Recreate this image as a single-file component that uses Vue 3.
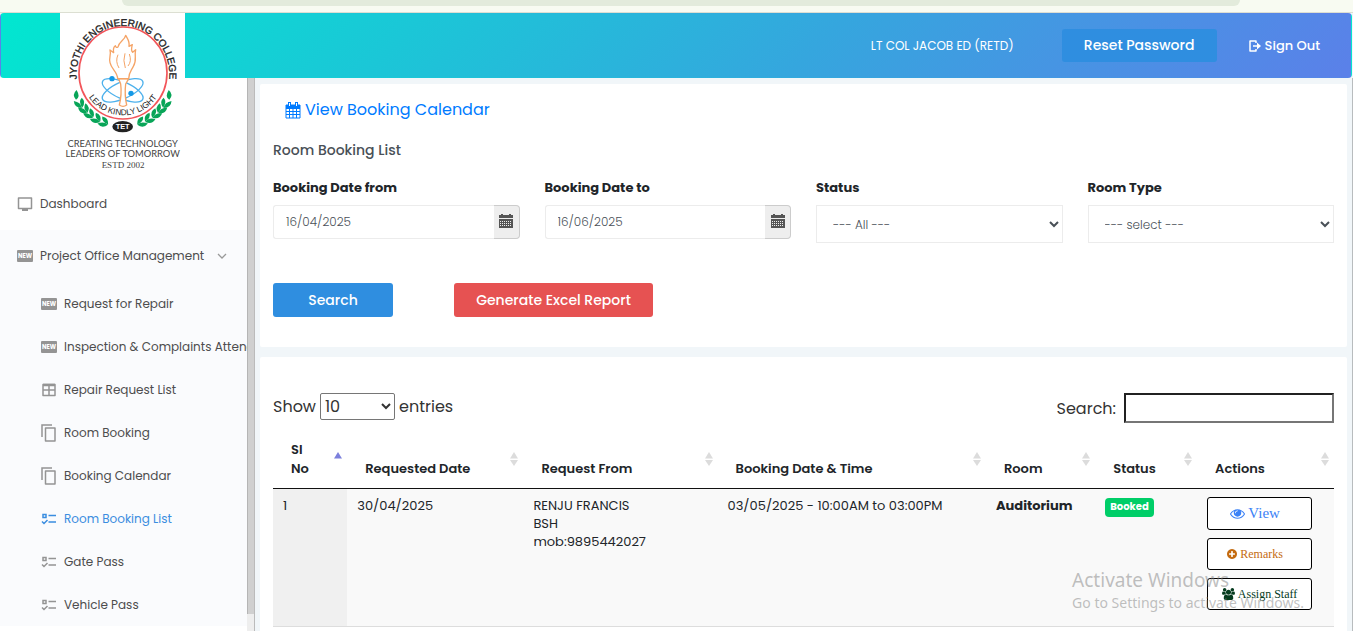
<script setup>
import { ref } from 'vue'

const navItems = [
  { label: 'Request for Repair', icon: 'new' },
  { label: 'Inspection & Complaints Attended', icon: 'new' },
  { label: 'Repair Request List', icon: 'grid' },
  { label: 'Room Booking', icon: 'copy' },
  { label: 'Booking Calendar', icon: 'copy' },
  { label: 'Room Booking List', icon: 'list', active: true },
  { label: 'Gate Pass', icon: 'list' },
  { label: 'Vehicle Pass', icon: 'list' },
]

const columns = [
  { label: 'Sl No', cls: 'c-no', sorted: true },
  { label: 'Requested Date', cls: 'c-date' },
  { label: 'Request From', cls: 'c-from' },
  { label: 'Booking Date & Time', cls: 'c-time' },
  { label: 'Room', cls: 'c-room' },
  { label: 'Status', cls: 'c-status' },
  { label: 'Actions', cls: 'c-actions' },
]

const rows = [
  {
    no: 1,
    date: '30/04/2025',
    from: ['RENJU FRANCIS', 'BSH', 'mob:9895442027'],
    time: '03/05/2025 - 10:00AM to 03:00PM',
    room: 'Auditorium',
    status: 'Booked',
  },
]

// Angle of each laurel leaf pair around the emblem, in degrees below the horizontal.
const leaves = [35, 43, 51, 60, 69]

const dateFrom = ref('16/04/2025')
const dateTo = ref('16/06/2025')
const status = ref('all')
const roomType = ref('')
const pageSize = ref('10')
const query = ref('')
</script>

<template>
  <div class="page">
    <div class="browser-strip"><div class="address-bar"></div></div>

    <header class="topbar">
      <a href="#" class="logo" aria-label="Jyothi Engineering College">
        <svg viewBox="180 39 375 480" width="125" height="160">
          <defs>
            <path id="arc-top" d="M233 253A139 145 0 1 1 505 253" />
            <path id="arc-bottom" d="M247 244A124 124 0 0 0 491 244" />
          </defs>
          <text class="arc-name"><textPath href="#arc-top" startOffset="50%">JYOTHI ENGINEERING COLLEGE</textPath></text>
          <ellipse cx="369" cy="219" rx="132" ry="138" fill="none" stroke="#f2555a" stroke-width="5" />
          <text class="arc-motto"><textPath href="#arc-bottom" startOffset="50%">LEAD KINDLY LIGHT</textPath></text>
          <g fill="none" stroke="#4db1ec" stroke-width="4">
            <ellipse cx="368" cy="271" rx="66" ry="25" transform="rotate(24 368 271)" />
            <ellipse cx="368" cy="271" rx="66" ry="25" transform="rotate(-24 368 271)" />
          </g>
          <g fill="#fff" stroke="#f5a467" stroke-width="4" stroke-linejoin="round">
            <path d="M356 236L362 252Q366 283 358 315Q369 323 380 315Q373 283 377 252L386 236Z" />
            <path d="M353 236C352 216 334 207 330 188C326 172 334 164 330 150L341 158Q338 143 346 137Q348 145 354 141C357 124 374 121 377 106C382 116 390 124 387 139L397 134Q392 151 398 157L407 149C402 171 412 180 400 199C393 213 386 218 386 236Z" />
            <path d="M354 164Q345 184 357 204M388 162Q396 184 384 198M375 160Q368 181 376 204" fill="none" stroke-width="3" />
            <path d="M353 236H386" fill="none" />
          </g>
          <circle cx="336" cy="236" r="8" fill="#1499e6" />
          <circle cx="393" cy="280" r="8" fill="#1499e6" />
          <g fill="#08a558">
            <g v-for="side in [1, -1]" :key="side" :transform="`translate(368 221) scale(${side} 1)`">
              <path transform="rotate(25)" d="M146 -14Q166 -8 160 12Q143 10 146 -14Z" />
              <g v-for="a in leaves" :key="a" :transform="`rotate(${a})`">
                <path d="M159 14Q152 -2 167 -17Q178 1 159 14Z" />
                <path d="M158 14Q138 8 142 -11Q158 -8 158 14Z" />
              </g>
            </g>
          </g>
          <ellipse cx="368" cy="380" rx="31" ry="17" fill="#222" />
          <text class="tet" x="368" y="388">TET</text>
          <text class="tagline" x="368" y="442">CREATING TECHNOLOGY</text>
          <text class="tagline" x="368" y="472">LEADERS OF TOMORROW</text>
          <text class="estd" x="369" y="503">ESTD 2002</text>
        </svg>
      </a>
      <span class="user-name">LT COL JACOB ED (RETD)</span>
      <button type="button" class="btn reset">Reset Password</button>
      <a href="#" class="sign-out">
        <svg viewBox="0 0 12 12" width="12" height="12" fill="none" stroke="currentColor" stroke-width="1.500" stroke-linejoin="round">
          <path d="M7 3V1H1V11H7V9M4 6H9" /><path d="M8 2.500L12 6L8 9.500Z" fill="currentColor" stroke="none" />
        </svg>
        Sign Out
      </a>
    </header>

    <div class="body">
      <nav class="sidebar">
        <a href="#" class="nav-link top">
          <svg viewBox="0 0 16 14" width="16" height="14"><path d="M1.500 1H14.500V11.500H1.500Z" fill="none" stroke="#949494" stroke-width="1.500" stroke-linejoin="round" /><path d="M5 12H11V14H5Z" fill="#949494" /></svg>
          Dashboard
        </a>
        <div class="nav-group">
          <a href="#" class="nav-link top">
            <span class="new-icon">NEW</span>
            Project Office Management
            <svg class="chevron" viewBox="0 0 10 6" width="10" height="6"><path d="M1 1L5 5L9 1" fill="none" stroke="#999" stroke-width="1.300" /></svg>
          </a>
          <a v-for="item in navItems" :key="item.label" href="#" class="nav-link sub" :class="{ active: item.active }">
            <span v-if="item.icon === 'new'" class="new-icon">NEW</span>
            <svg v-else-if="item.icon === 'grid'" viewBox="0 0 16 14" width="16" height="14"><path d="M2 1.500H14V12.500H2ZM2 7H14M8 2V12" fill="none" stroke="currentColor" stroke-width="1.500" stroke-linejoin="round" /><path d="M2 2H14" stroke="currentColor" stroke-width="2.500" /></svg>
            <svg v-else-if="item.icon === 'copy'" viewBox="0 0 16 18" width="16" height="18" fill="none" stroke="currentColor" stroke-width="1.500"><path d="M1 13V1H11" /><path d="M4.500 4H14V17H4.500Z" stroke-linejoin="round" /></svg>
            <svg v-else viewBox="0 0 16 12" width="16" height="12" fill="none" stroke="currentColor" stroke-width="1.500"><path d="M2 1.500H5V4.500H2ZM7.500 2.500H15M7.500 9H15M1 8.500L3 10.500L6.500 7" /></svg>
            {{ item.label }}
          </a>
        </div>
      </nav>
      <div class="scroll-track"><div class="scroll-thumb"></div></div>

      <main class="content">
        <section class="card">
          <a href="#" class="calendar-link">
            <svg viewBox="0 0 16 17" width="16" height="17"><path d="M1 3H15V16H1ZM1 6.500H15M1 9.500H15M1 12.500H15M4.500 6V16M8 6V16M11.500 6V16" fill="none" stroke="currentColor" /><path d="M1 3H15V6H1ZM3 0H6V5H3ZM10 0H13V5H10Z" fill="currentColor" /><path d="M4.500 1V4M11.500 1V4" stroke="#fff" /></svg>
            View Booking Calendar
          </a>
          <h1>Room Booking List</h1>
          <form class="filters" @submit.prevent>
            <div class="field">
              <label for="from">Booking Date from</label>
              <div class="date-box">
                <input id="from" v-model="dateFrom" type="text" />
                <button type="button" aria-label="Pick start date">
                  <svg viewBox="0 0 14 14" width="14" height="14"><path d="M0 1H2V0H4V1H10V0H12V1H14V4H0ZM0 5H14V14H0Z" fill="#555" /><path d="M1 7.500H13M1 9.500H13M1 11.500H13" stroke="#eee" stroke-dasharray="1 1" /></svg>
                </button>
              </div>
            </div>
            <div class="field">
              <label for="to">Booking Date to</label>
              <div class="date-box">
                <input id="to" v-model="dateTo" type="text" />
                <button type="button" aria-label="Pick end date">
                  <svg viewBox="0 0 14 14" width="14" height="14"><path d="M0 1H2V0H4V1H10V0H12V1H14V4H0ZM0 5H14V14H0Z" fill="#555" /><path d="M1 7.500H13M1 9.500H13M1 11.500H13" stroke="#eee" stroke-dasharray="1 1" /></svg>
                </button>
              </div>
            </div>
            <div class="field">
              <label for="status">Status</label>
              <select id="status" v-model="status"><option value="all">--- All ---</option></select>
            </div>
            <div class="field">
              <label for="room">Room Type</label>
              <select id="room" v-model="roomType"><option value="">--- select ---</option></select>
            </div>
          </form>
          <div class="actions">
            <button type="button" class="btn search">Search</button>
            <button type="button" class="btn excel">Generate Excel Report</button>
          </div>
        </section>

        <section class="card list">
          <div class="table-tools">
            <label class="length">Show
              <select v-model="pageSize"><option>10</option><option>25</option></select>
              entries</label>
            <label class="finder">Search: <input v-model="query" type="search" /></label>
          </div>
          <table>
            <thead>
              <tr>
                <th v-for="c in columns" :key="c.label" :class="c.cls" scope="col">
                  {{ c.label }}
                  <svg class="sort" viewBox="0 0 8 14" width="8" height="14">
                    <path d="M0 6.500L4 0L8 6.500Z" :fill="c.sorted ? '#7c80dc' : '#dcdcdc'" />
                    <path v-if="!c.sorted" d="M0 8L4 14L8 8Z" fill="#dcdcdc" />
                  </svg>
                </th>
              </tr>
            </thead>
            <tbody>
              <tr v-for="r in rows" :key="r.no">
                <td class="sorted">{{ r.no }}</td>
                <td>{{ r.date }}</td>
                <td><div v-for="l in r.from" :key="l">{{ l }}</div></td>
                <td>{{ r.time }}</td>
                <td class="strong">{{ r.room }}</td>
                <td><span class="badge">{{ r.status }}</span></td>
                <td>
                  <div class="row-actions">
                    <button type="button" class="view">
                      <svg viewBox="0 0 1792 1792" width="15" height="15" fill="currentColor"><path d="M1664 960q-152-236-381-353 61 104 61 225 0 185-131.500 316.500t-316.500 131.500-316.500-131.500-131.500-316.500q0-121 61-225-229 117-381 353 133 205 333.500 326.500t434.500 121.500 434.500-121.500 333.500-326.500zm-720-384q0-20-14-34t-34-14q-125 0-214.500 89.500t-89.500 214.500q0 20 14 34t34 14 34-14 14-34q0-86 61-147t147-61q20 0 34-14t14-34zm848 384q0 34-20 69-140 230-376.500 368.500t-499.500 138.500-499.500-139-376.500-368q-20-35-20-69t20-69q140-229 376.500-368t499.500-139 499.500 139 376.500 368q20 35 20 69z" /></svg>
                      View
                    </button>
                    <button type="button" class="remarks">
                      <svg viewBox="128 128 1536 1536" width="10" height="10" fill="currentColor"><path d="M1344 960v-128q0-26-19-45t-45-19h-256v-256q0-26-19-45t-45-19h-128q-26 0-45 19t-19 45v256h-256q-26 0-45 19t-19 45v128q0 26 19 45t45 19h256v256q0 26 19 45t45 19h128q26 0 45-19t19-45v-256h256q26 0 45-19t19-45zm320-64q0 209-103 385.500t-279.500 279.500-385.500 103-385.500-103-279.500-279.500-103-385.500 103-385.500 279.500-279.500 385.500-103 385.500 103 279.500 279.500 103 385.500z" /></svg>
                      Remarks
                    </button>
                    <button type="button" class="assign">
                      <svg viewBox="-64 0 1920 1792" width="13" height="12" fill="currentColor"><path d="M529 896q-162 5-265 128h-134q-82 0-138-40.500t-56-118.500q0-353 124-353 6 0 43.500 21t97.500 42.500 119 21.500q67 0 133-23-5 37-5 66 0 139 81 256zm1071 637q0 120-73 189.500t-194 69.500h-874q-121 0-194-69.500t-73-189.500q0-53 3.500-103.500t14-109 26.500-108.500 43-97.500 62-81 85.500-53.500 111.500-20q10 0 43 21.500t73 48 107 48 135 21.500 135-21.500 107-48 73-48 43-21.500q61 0 111.500 20t85.500 53.500 62 81 43 97.500 26.500 108.500 14 109 3.500 103.500zm-1024-1277q0 106-75 181t-181 75-181-75-75-181 75-181 181-75 181 75 75 181zm704 384q0 159-112.500 271.500t-271.500 112.500-271.500-112.500-112.500-271.500 112.500-271.500 271.500-112.500 271.500 112.500 112.500 271.500zm576 225q0 78-56 118.500t-138 40.500h-134q-103-123-265-128 81-117 81-256 0-29-5-66 66 23 133 23 59 0 119-21.500t97.500-42.500 43.500-21q124 0 124 353zm-128-609q0 106-75 181t-181 75-181-75-75-181 75-181 181-75 181 75 75 181z" /></svg>
                      Assign Staff
                    </button>
                  </div>
                </td>
              </tr>
            </tbody>
          </table>
        </section>
      </main>
    </div>

    <div class="watermark">
      <div class="wm-title">Activate Windows</div>
      <div>Go to Settings to activate Windows.</div>
    </div>
  </div>
</template>

<style>
body {
  margin: 0;
}
</style>

<style scoped>
.page,
.page * {
  box-sizing: border-box;
}
.page {
  position: relative;
  display: flex;
  flex-direction: column;
  height: 100vh;
  overflow: hidden;
  background: #f1f6f9;
  color: #212529;
  font-family: Poppins, Inter, sans-serif;
  font-size: 13px;
}
a {
  color: inherit;
  text-decoration: none;
}
button,
input,
select {
  font-family: inherit;
}
svg {
  flex: none;
}
.browser-strip {
  flex: none;
  height: 13px;
  padding: 0 113px 0 122px;
  background: #f8fbf2;
  border-bottom: 1px solid #dcdfd2;
}
.address-bar {
  height: 6px;
  background: #e3ebdc;
  border-radius: 0 0 16px 16px;
}
.topbar {
  position: relative;
  z-index: 1;
  flex: none;
  display: flex;
  align-items: center;
  height: 65px;
  margin-right: 1px;
  padding: 0 31px 0 59px;
  border: 1px solid transparent;
  border-radius: 4px;
  background: linear-gradient(135deg, #01e7d0, #35a6de 60%, #5b80e9);
  color: #fff;
}
.logo {
  align-self: flex-start;
  height: 160px;
  margin: -1px auto 0 0;
  background: #fff;
}
.logo svg {
  display: block;
}
.logo text {
  text-anchor: middle;
  fill: #222;
}
.arc-name {
  font: 30px "Liberation Sans", sans-serif;
  stroke: #222;
  stroke-width: 1px;
}
.arc-motto {
  font: 25px "Liberation Sans", sans-serif;
}
.logo .tet {
  font: bold 22px "Liberation Sans", sans-serif;
  fill: #fff;
}
.logo .tagline {
  font: 28px Lato, sans-serif;
  fill: #444;
}
.logo .estd {
  font: 27px "Liberation Serif", serif;
  fill: #444;
}
.user-name {
  margin-right: 48px;
  font-size: 12px;
}
.btn {
  height: 34px;
  padding: 0;
  border: 0;
  border-radius: 3px;
  background: #2f8ee0;
  color: #fff;
  font-size: 14px;
  font-weight: 500;
}
.reset {
  width: 155px;
  height: 33px;
  margin-right: 32px;
}
.sign-out {
  display: flex;
  align-items: center;
  gap: 4px;
  font-size: 13px;
  font-weight: 500;
}
.body {
  flex: 1;
  display: flex;
  min-height: 0;
  border-right: 1px solid #b8bcbe;
}
.sidebar {
  flex: none;
  width: 247px;
  padding-top: 100px;
  overflow: hidden;
  background: #fff;
}
.nav-group {
  background: #fafbfd;
}
.nav-link {
  display: flex;
  align-items: center;
  gap: 7px;
  height: 43px;
  padding-left: 41px;
  color: #4d4d4d;
  font-size: 12px;
  white-space: nowrap;
}
.nav-link.top {
  height: 52px;
  padding-left: 17px;
}
.nav-link svg {
  color: #949494;
}
.nav-link.active,
.nav-link.active svg {
  color: #3a8de0;
}
.new-icon {
  flex: none;
  width: 16px;
  height: 12px;
  border-radius: 1px;
  background: #949494;
  color: #fff;
  font-size: 6px;
  font-weight: 700;
  line-height: 12px;
  text-align: center;
}
.chevron {
  margin-left: 6px;
}
.scroll-track {
  flex: none;
  width: 8px;
  background: #eee;
  border-right: 1px solid #bbb;
}
.scroll-thumb {
  height: 97%;
  background: #d0d0d0;
  border-left: 1px solid #b5b5b5;
}
.content {
  flex: 1;
  min-width: 0;
  padding: 6px 5px 0;
}
.card {
  padding: 14px 13px 30px;
  border-radius: 2px;
  background: #fff;
}
.calendar-link {
  display: flex;
  align-items: center;
  gap: 4px;
  width: max-content;
  margin-left: 12px;
  color: #007bff;
  font-size: 16px;
  line-height: 24px;
}
h1 {
  margin: 18px 0;
  color: #495057;
  font-size: 14px;
  font-weight: 500;
  line-height: 20px;
}
.filters {
  display: grid;
  grid-template-columns: repeat(4, minmax(0, 1fr));
  gap: 25px;
}
.field label {
  display: block;
  margin-bottom: 8px;
  font-weight: 700;
  line-height: 19px;
}
.date-box {
  display: flex;
  height: 34px;
}
.date-box input {
  flex: 1;
  min-width: 0;
  padding: 0 12px;
  border: 1px solid #ececec;
  border-right: 0;
  border-radius: 3px 0 0 3px;
  color: #495057;
  font-size: 12px;
  font-weight: 300;
}
.date-box button {
  width: 26px;
  padding: 0 0 3px;
  border: 1px solid #ccc;
  border-left: 0;
  border-radius: 0 4px 4px 0;
  background: #eee;
}
.date-box button svg {
  vertical-align: middle;
}
.field select {
  width: 100%;
  height: 38px;
  padding: 0 0 0 12px;
  border: 1px solid #ececec;
  border-radius: 0;
  background: #fff;
  color: #495057;
  font-size: 12px;
  font-weight: 300;
}
.actions {
  display: flex;
  gap: 61px;
  margin-top: 40px;
}
.search {
  width: 120px;
}
.excel {
  width: 199px;
  background: #e65252;
}
.list {
  height: 100%;
  margin-top: 10px;
  padding-top: 36px;
}
.table-tools {
  display: flex;
  justify-content: space-between;
  align-items: flex-start;
  color: #333;
  font-size: 16px;
}
.table-tools label {
  display: flex;
  align-items: center;
}
.length {
  gap: 4px;
}
.length select {
  width: 75px;
  height: 27px;
  padding: 0;
  border: 1px solid #767676;
  border-radius: 2px;
  background: #fff;
  color: #333;
  font-size: 16px;
}
.finder {
  gap: 8px;
}
.finder input {
  width: 210px;
  height: 30px;
  border: 2px inset #767676;
  background: #fff;
  font-size: 16px;
}
table {
  width: 100%;
  margin-top: 7px;
  border-collapse: separate;
  border-spacing: 0;
  table-layout: fixed;
}
th {
  position: relative;
  padding: 10px 18px;
  border-bottom: 1px solid #111;
  font-weight: 600;
  line-height: 19px;
  text-align: left;
  vertical-align: bottom;
}
.sort {
  position: absolute;
  top: 22px;
  right: 5px;
}
.c-no {
  width: 7%;
  padding-right: 30px;
}
.c-date {
  width: 16.600%;
}
.c-from {
  width: 18.300%;
}
.c-time {
  width: 25.300%;
}
.c-room {
  width: 10.300%;
}
.c-status {
  width: 9.600%;
}
td {
  padding: 8px 10px 16px;
  border-bottom: 1px solid #ddd;
  background: #f9f9f9;
  line-height: 18px;
  vertical-align: top;
}
.sorted {
  background: #f0f0f0;
}
.strong {
  font-weight: 700;
}
.badge {
  display: inline-block;
  height: 19px;
  padding: 0 5px;
  border-radius: 4px;
  background: #00ce68;
  color: #fff;
  font-size: 10px;
  font-weight: 700;
}
.row-actions {
  display: flex;
  flex-direction: column;
  gap: 8px;
}
.row-actions button {
  display: flex;
  align-items: center;
  justify-content: center;
  gap: 3px;
  width: 105px;
  height: 32px;
  padding: 0;
  border: 1px solid #000;
  border-radius: 3px;
  background: #fff;
  font-family: "Liberation Serif", serif;
  font-size: 12px;
}
.row-actions .view {
  height: 33px;
  padding-right: 9px;
  color: #3b82f6;
  font-size: 15px;
}
.row-actions .remarks {
  padding-right: 9px;
  color: #c46b10;
}
.row-actions .assign {
  color: #053b1e;
}
.watermark {
  position: absolute;
  right: 49px;
  bottom: 18px;
  z-index: 2;
  color: rgba(130, 130, 130, 0.5);
  font: 14px/20px "Noto Sans", sans-serif;
  pointer-events: none;
}
.wm-title {
  font-size: 19px;
  line-height: 25px;
}
</style>
